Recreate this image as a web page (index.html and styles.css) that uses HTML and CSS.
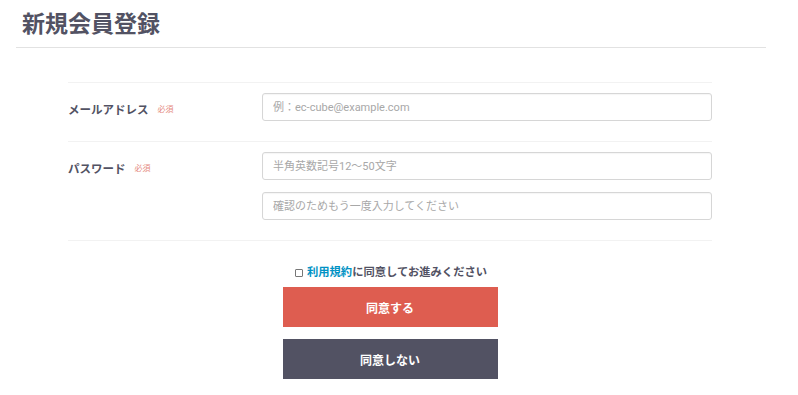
FILE: index.html
```html
<!DOCTYPE html>
<html lang="ja">
<head>
<meta charset="utf-8">
<title>新規会員登録</title>
<link rel="stylesheet" href="styles.css">
</head>
<body>
<div class="page-header">
  <h1 class="page-title">新規会員登録</h1>
</div>
<form class="entry">
  <div class="form-table">
    <div class="form-row">
      <div class="form-label">メールアドレス<span class="required">必須</span></div>
      <div class="form-fields">
        <input class="text-input" type="email" placeholder="例：ec-cube@example.com">
      </div>
    </div>
    <div class="form-row">
      <div class="form-label">パスワード<span class="required">必須</span></div>
      <div class="form-fields">
        <input class="text-input" type="password" placeholder="半角英数記号12〜50文字">
        <input class="text-input" type="password" placeholder="確認のためもう一度入力してください">
      </div>
    </div>
  </div>
  <div class="agree">
    <label class="agree-label"><input class="agree-check" type="checkbox"><a class="terms-link" href="#">利用規約</a>に同意してお進みください</label>
    <button class="btn btn-primary" type="button">同意する</button>
    <button class="btn btn-secondary" type="button">同意しない</button>
  </div>
</form>
</body>
</html>
```

FILE: styles.css
```css
* { box-sizing: border-box; }
html, body {
  margin: 0;
  padding: 0;
  background: #fff;
  color: #525263;
  font-family: Roboto, "Noto Sans CJK JP", sans-serif;
}
.page-header {
  margin: 0 32px 0 16px;
  padding: 9px 0 6px 6px;
  border-bottom: 1px solid #e2e2e2;
}
.page-title {
  margin: 0;
  font-size: 23px;
  line-height: 32px;
  font-weight: 700;
  color: #525263;
}
.entry {
  width: 644px;
  margin: 34px 0 0 68px;
}
.form-table {
  border-top: 1px solid #f2f2f2;
}
.form-row {
  display: flex;
  padding: 10px 0 20px;
  border-bottom: 1px solid #f2f2f2;
}
.form-label {
  width: 194px;
  font-size: 11.5px;
  font-weight: 700;
  line-height: 18px;
  padding-top: 8px;
  display: flex;
  align-items: center;
  align-self: flex-start;
}
.required {
  margin-left: 9px;
  font-size: 8px;
  font-weight: 400;
  color: #e58a80;
}
.form-fields {
  flex: 1;
  display: flex;
  flex-direction: column;
  gap: 12px;
}
.text-input {
  display: block;
  width: 100%;
  height: 28px;
  padding: 0 10px;
  border: 1px solid #d6d6d6;
  border-radius: 3px;
  box-shadow: inset 0 1px 1px rgba(0,0,0,0.04);
  font-family: Roboto, "Noto Sans CJK JP", sans-serif;
  font-size: 11px;
  color: #525263;
  background: #fff;
  outline: none;
}
.text-input::placeholder {
  color: #a8a8a8;
}
.agree {
  display: flex;
  flex-direction: column;
  align-items: center;
  padding-top: 24px;
}
.agree-label {
  display: flex;
  align-items: center;
  font-size: 11.3px;
  font-weight: 700;
  line-height: 16px;
  color: #525263;
  margin-bottom: 6px;
  margin-left: 2px;
}
.agree-check {
  -webkit-appearance: none;
  appearance: none;
  width: 8px;
  height: 8px;
  margin: 0 4px 0 0;
  border: 1px solid #777;
  border-radius: 1px;
  background: #fff;
}
.terms-link {
  color: #0092c4;
  text-decoration: none;
}
.btn {
  width: 215px;
  height: 40px;
  border: 1px solid transparent;
  border-radius: 0;
  font-family: Roboto, "Noto Sans CJK JP", sans-serif;
  font-size: 12px;
  font-weight: 700;
  color: #fff;
  cursor: pointer;
}
.btn-primary {
  background: #de5d50;
  border-color: #de5d50;
}
.btn-secondary {
  margin-top: 12px;
  background: #525263;
  border-color: #525263;
}
```
